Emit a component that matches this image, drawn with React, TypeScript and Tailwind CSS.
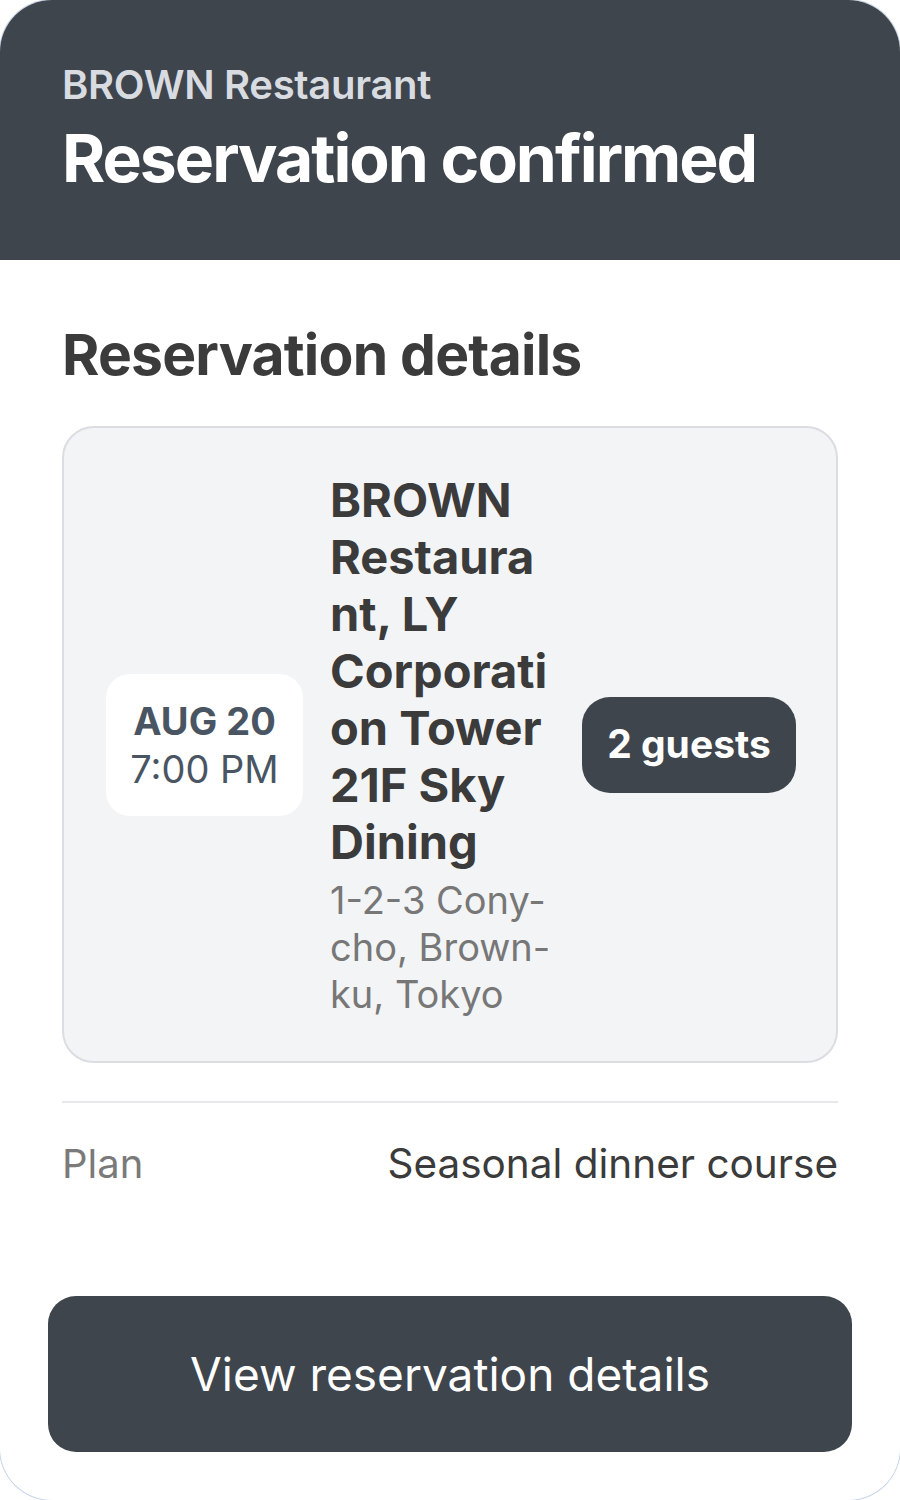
export default function App() {
  return (
    <div className="min-h-[1500px] w-[900px] bg-white font-['Inter',sans-serif]">
      <div className="flex h-[1500px] w-[900px] flex-col overflow-hidden rounded-[52px] bg-white shadow-[0_0_0_1px_#c8d4ea]">
        <div className="h-[260px] shrink-0 bg-[#3f454d] px-[62px] pt-[61px]">
          <p className="text-[40px] font-semibold leading-[48px] tracking-[-0.3px] text-[#d8dbe0]">BROWN Restaurant</p>
          <h1 className="mt-[9px] text-[66px] font-bold leading-[80px] tracking-[-2px] text-white">
            Reservation confirmed
          </h1>
        </div>

        <div className="flex flex-1 flex-col px-[62px]">
          <h2 className="mt-[62px] text-[57px] font-bold leading-[66px] tracking-[-0.8px] text-[#3b3b3b]">
            Reservation details
          </h2>

          <div className="mt-[38px] flex items-center gap-[27px] rounded-[32px] border-2 border-[#dcdde2] bg-[#f3f4f6] px-[42px] py-[43px]">
            <div className="flex h-[142px] w-[197px] shrink-0 flex-col items-center justify-center rounded-[24px] bg-white">
              <span className="text-[38px] font-bold leading-[48px] text-[#4a5563]">AUG 20</span>
              <span className="text-[38px] leading-[48px] text-[#4a5563]">7:00 PM</span>
            </div>

            <div className="w-[222px] shrink-0 [overflow-wrap:anywhere]">
              <p className="text-[47px] font-bold leading-[57px] text-[#3b3b3b]">
                BROWN Restaurant, LY Corporation Tower 21F Sky Dining
              </p>
              <p className="mt-[7px] text-[38px] leading-[47px] text-[#777777]">1-2-3 Cony-cho, Brown-ku, Tokyo</p>
            </div>

            <div className="ml-[3px] flex h-[96px] w-[214px] shrink-0 items-center justify-center rounded-[28px] bg-[#3f454d]">
              <span className="text-[39px] font-bold text-white">2 guests</span>
            </div>
          </div>

          <div className="mt-[38px] h-[2px] bg-[#e8e8ea]" />

          <div className="mt-[36px] flex items-center justify-between">
            <span className="text-[40px] leading-[50px] text-[#7a7a7a]">Plan</span>
            <span className="text-[40.5px] leading-[50px] text-[#3b3b3b]">Seasonal dinner course</span>
          </div>

          <button className="mx-[-14px] mt-[107px] flex h-[156px] items-center justify-center rounded-[28px] bg-[#3f454d]">
            <span className="text-[46px] text-white">View reservation details</span>
          </button>
        </div>
      </div>
    </div>
  );
}
